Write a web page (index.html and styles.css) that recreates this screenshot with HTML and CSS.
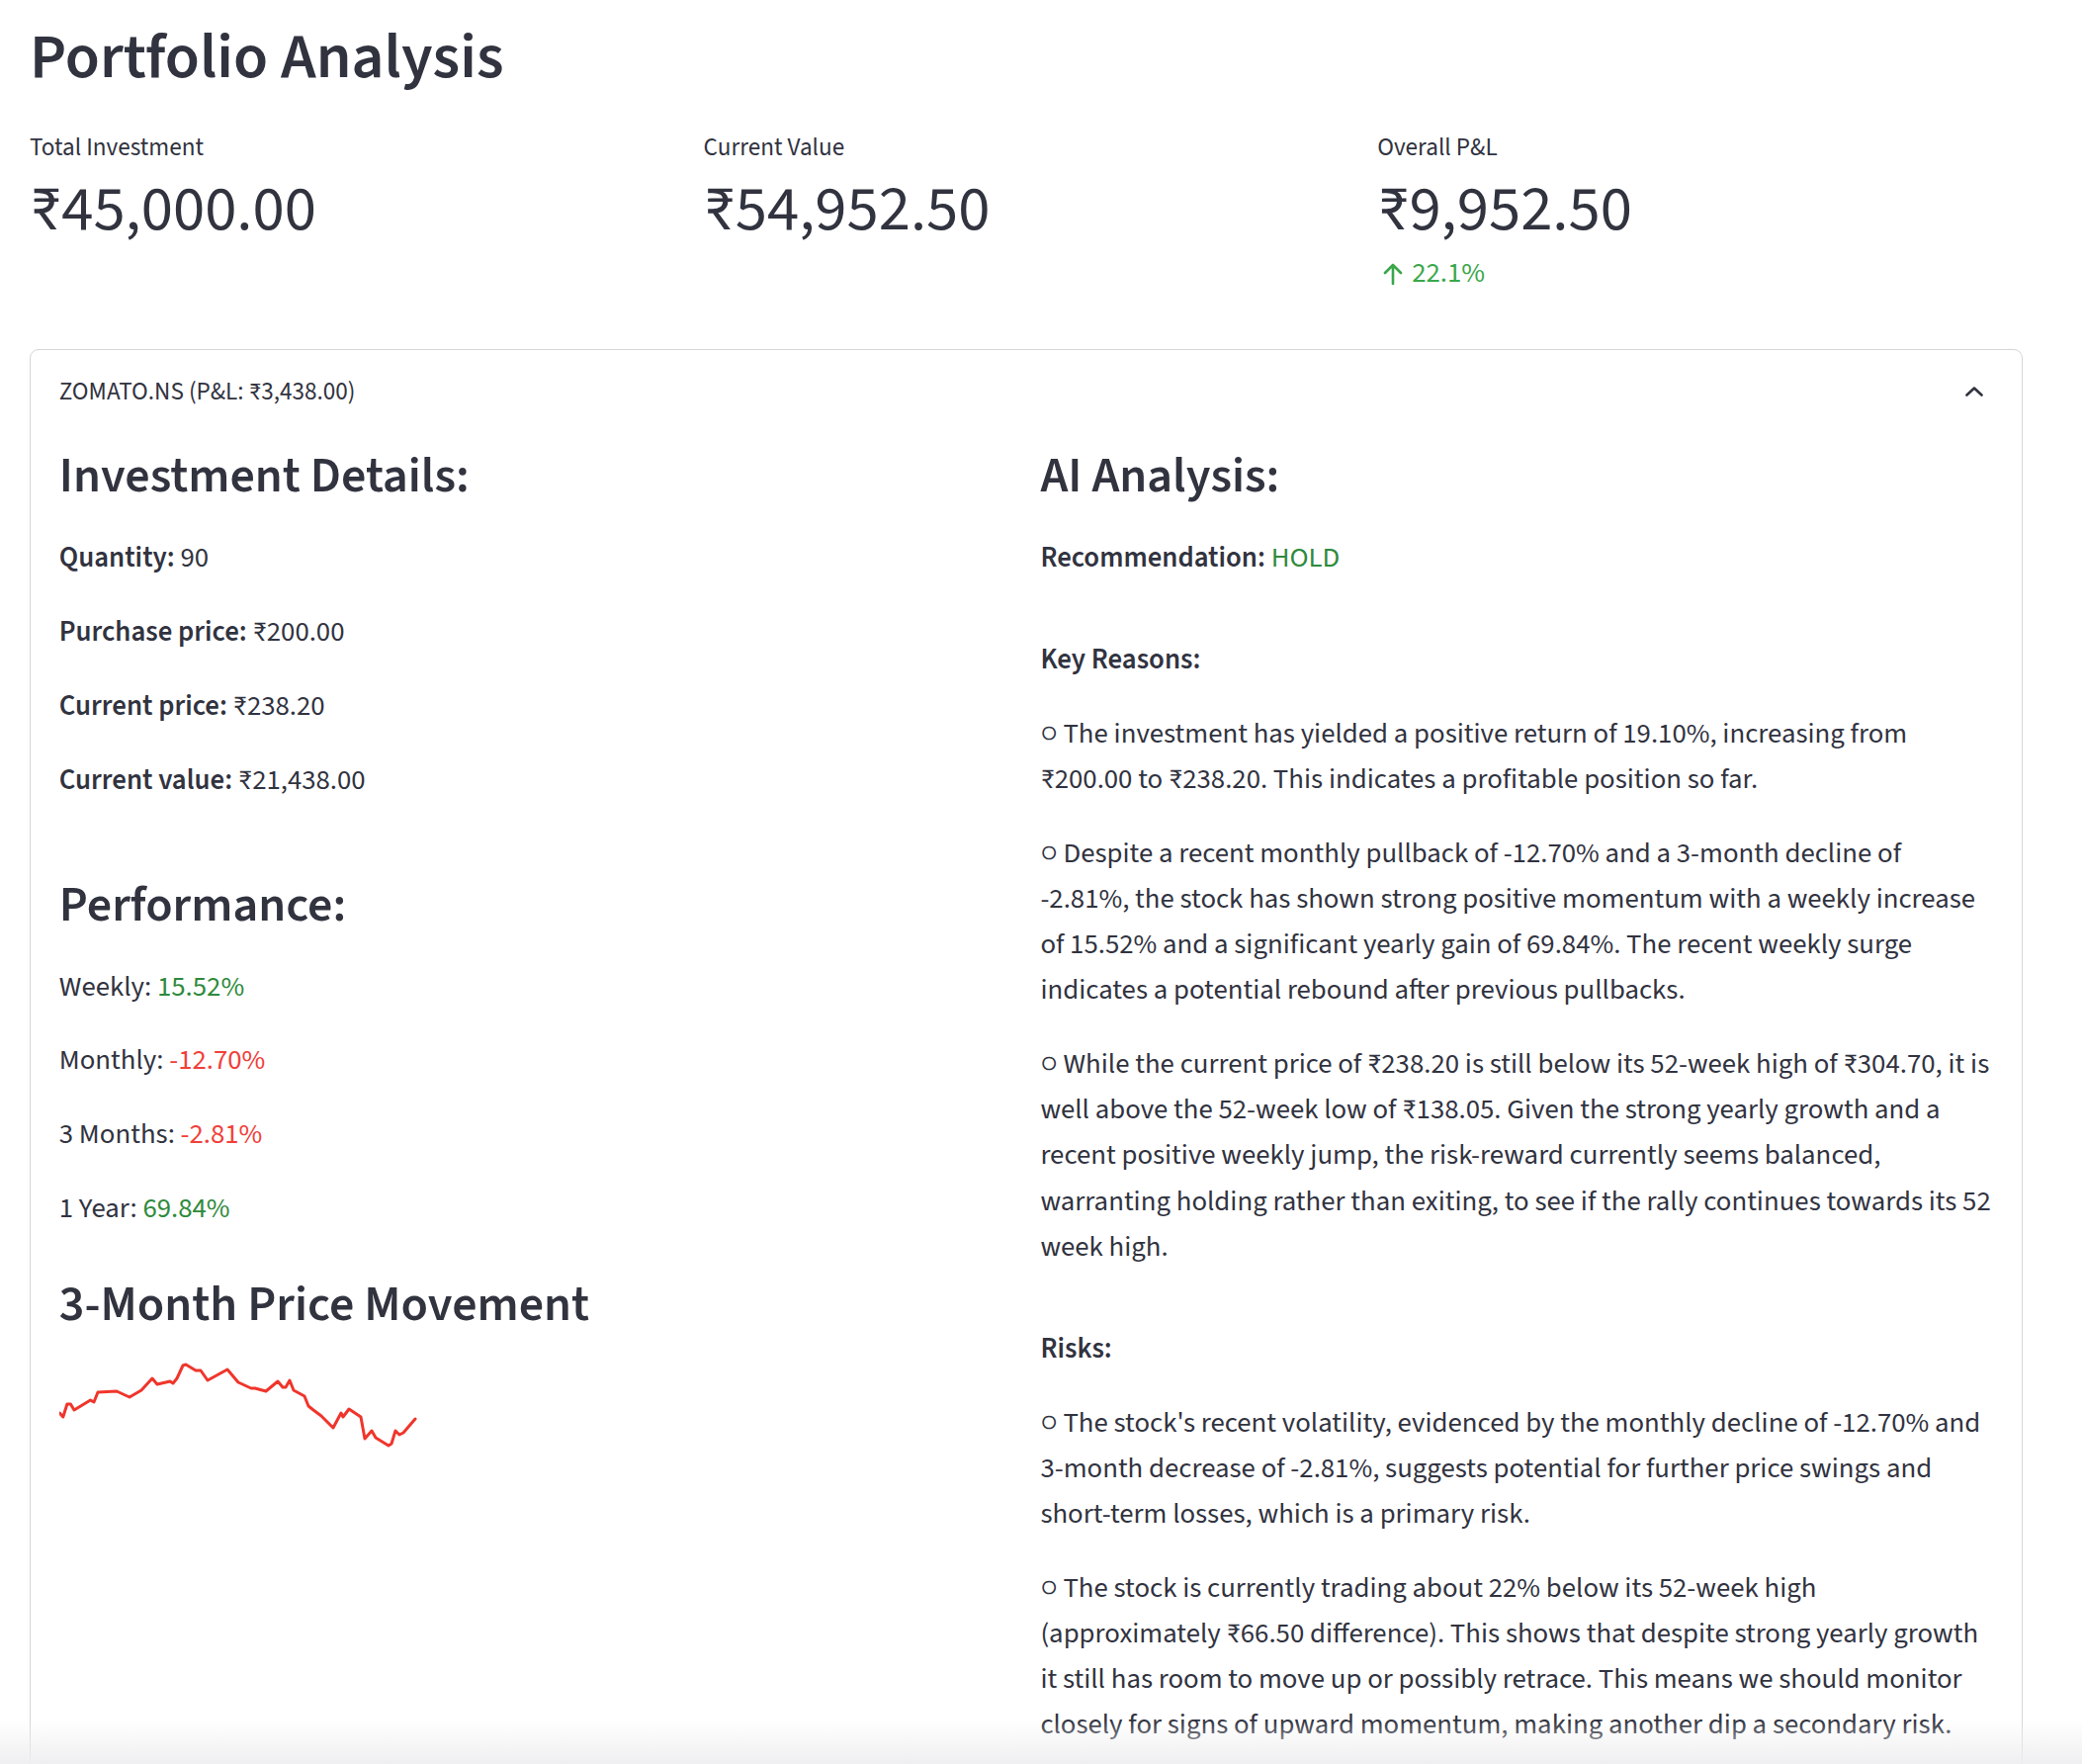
FILE: index.html
```html
<!DOCTYPE html>
<html lang="en">
<head>
<meta charset="utf-8">
<title>Portfolio Analysis</title>
<link rel="stylesheet" href="styles.css">
</head>
<body>
<main class="page">
  <h1 class="title">Portfolio Analysis</h1>

  <section class="metrics">
    <div class="metric">
      <div class="metric-label">Total Investment</div>
      <div class="metric-value">₹45,000.00</div>
    </div>
    <div class="metric">
      <div class="metric-label">Current Value</div>
      <div class="metric-value">₹54,952.50</div>
    </div>
    <div class="metric">
      <div class="metric-label">Overall P&amp;L</div>
      <div class="metric-value">₹9,952.50</div>
      <div class="metric-delta">
        <svg class="delta-arrow" viewBox="0 0 20 22" width="20" height="22"><path d="M10 21V2M2 10l8-8 8 8" fill="none" stroke="currentColor" stroke-width="2.6" stroke-linecap="round" stroke-linejoin="round"/></svg>
        <span>22.1%</span>
      </div>
    </div>
  </section>

  <section class="expander">
    <div class="exp-header">
      <span class="exp-title">ZOMATO.NS (P&amp;L: ₹3,438.00)</span>
      <svg class="chevron" viewBox="0 0 18 10" width="18" height="10"><path d="M1.5 8.5L9 1.5l7.5 7" fill="none" stroke="#31333f" stroke-width="2.6" stroke-linecap="round" stroke-linejoin="round"/></svg>
    </div>
    <div class="exp-body">
      <div class="col">
        <h3>Investment Details:</h3>
        <p><b>Quantity:</b> 90</p>
        <p><b>Purchase price:</b> ₹200.00</p>
        <p><b>Current price:</b> ₹238.20</p>
        <p><b>Current value:</b> ₹21,438.00</p>

        <h3 class="h-perf">Performance:</h3>
        <p>Weekly: <span class="green">15.52%</span></p>
        <p>Monthly: <span class="red">-12.70%</span></p>
        <p>3 Months: <span class="red">-2.81%</span></p>
        <p>1 Year: <span class="green">69.84%</span></p>

        <h3 class="h-chart">3-Month Price Movement</h3>
        <svg class="sparkline" viewBox="0 0 400 120" width="400" height="120">
          <polyline fill="none" stroke="#f0352b" stroke-width="3" stroke-linejoin="round" stroke-linecap="round"
            points="0.3,69 3.8,73 7.9,60 11.4,60 15,66 31.5,56 35,58 39,48 58,47 71,53 83,46 94,34 99,40 112,37 115,39 119,34 125,21 128,20 138,26 143,26 150,36 170,25 181,38 194,44 198,44 209,47 221,37 226,43 229,43 233,36 237,46 248,52 252,62 257,66 265,72 277,84 285,69 287,73 293,65 305,73 309,95 316,87 320,94 333,102 336,100 340,87 344,91 348,89 360,75"/>
        </svg>
      </div>

      <div class="col">
        <h3>AI Analysis:</h3>
        <p><b>Recommendation:</b> <span class="green">HOLD</span></p>

        <p class="label-gap"><b>Key Reasons:</b></p>
        <p>○ The investment has yielded a positive return of 19.10%, increasing from ₹200.00 to ₹238.20. This indicates a profitable position so far.</p>
        <p>○ Despite a recent monthly pullback of -12.70% and a 3-month decline of -2.81%, the stock has shown strong positive momentum with a weekly increase of 15.52% and a significant yearly gain of 69.84%. The recent weekly surge indicates a potential rebound after previous pullbacks.</p>
        <p>○ While the current price of ₹238.20 is still below its 52-week high of ₹304.70, it is well above the 52-week low of ₹138.05. Given the strong yearly growth and a recent positive weekly jump, the risk-reward currently seems balanced, warranting holding rather than exiting, to see if the rally continues towards its 52 week high.</p>

        <p class="label-gap"><b>Risks:</b></p>
        <p>○ The stock's recent volatility, evidenced by the monthly decline of -12.70% and 3-month decrease of -2.81%, suggests potential for further price swings and short-term losses, which is a primary risk.</p>
        <p>○ The stock is currently trading about 22% below its 52-week high (approximately ₹66.50 difference). This shows that despite strong yearly growth it still has room to move up or possibly retrace. This means we should monitor closely for signs of upward momentum, making another dip a secondary risk.</p>
      </div>
    </div>
  </section>
</main>
<div class="bottom-fade"></div>
</body>
</html>
```

FILE: styles.css
```css
* { box-sizing: border-box; }

body {
  margin: 0;
  background: #ffffff;
  color: #31333f;
  font-family: "Source Sans Pro", "Source Sans 3", Lato, "Noto Sans", sans-serif;
}

.page {
  padding: 20px 60px 0 30px;
}

.title {
  margin: 0 0 33.7px;
  font-size: 64px;
  line-height: 77.76px;
  font-weight: 600;
}

.metrics {
  display: grid;
  grid-template-columns: repeat(3, 1fr);
  gap: 28.8px;
}

.metric-label {
  font-size: 25.2px;
  line-height: 36px;
  margin-bottom: 9px;
}

.metric-value {
  font-size: 64.8px;
  line-height: 72px;
}

.metric-delta {
  display: flex;
  align-items: center;
  gap: 9px;
  margin-top: 8.3px;
  padding-left: 6px;
  font-size: 28.8px;
  line-height: 40px;
  color: #3aa74a;
}

.delta-arrow { display: block; }

.expander {
  margin-top: 56.2px;
  border: 1px solid #d6d6d9;
  border-radius: 9px;
  min-height: 1500px;
}

.exp-header {
  display: flex;
  justify-content: space-between;
  align-items: center;
  padding: 24px 28.8px 0;
  font-size: 25.2px;
  line-height: 36px;
}

.chevron {
  display: block;
  margin-right: 10px;
}

.exp-body {
  display: grid;
  grid-template-columns: 1fr 1fr;
  gap: 28.8px;
  padding: 38.1px 28.8px 0;
}

.col {
  display: flex;
  flex-direction: column;
  align-items: flex-start;
}

.col h3 {
  margin: 0 0 29.9px;
  font-size: 50px;
  line-height: 60px;
  font-weight: 600;
}

.col p {
  margin: 0 0 28.8px;
  font-size: 28.8px;
  line-height: 46.08px;
}

.col b { font-weight: 600; }

.col .h-perf { margin-top: 44.3px; }
.col .h-chart { margin-top: 14.9px; margin-bottom: 9.9px; }
.col .label-gap { margin-top: 28.6px; }

.green { color: #2f8a3c; }
.red { color: #f0403a; }

.sparkline {
  display: block;
}

.bottom-fade {
  position: fixed;
  left: 0;
  right: 0;
  bottom: 0;
  height: 44px;
  background: linear-gradient(to bottom, rgba(255, 255, 255, 0), rgba(238, 238, 240, 0.95));
  pointer-events: none;
}
```
